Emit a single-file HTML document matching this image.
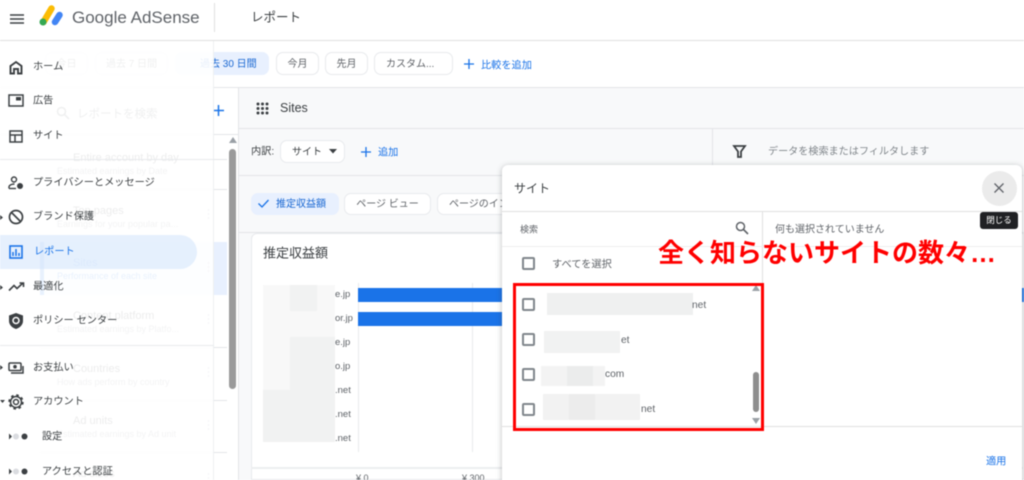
<!DOCTYPE html>
<html lang="ja"><head><meta charset="utf-8"><style>
html,body{margin:0;padding:0;background:#fff}
#p{position:relative;width:1024px;height:480px;overflow:hidden;background:#f8f9fa;font-family:"Liberation Sans","Noto Sans CJK JP",sans-serif;color:#3c4043;filter:blur(.45px)}
#p div{position:absolute;box-sizing:border-box}
.t{position:absolute;white-space:nowrap;line-height:14px;font-size:10.2px;transform:translateY(-5.5px)}
.l{transform:translateY(-6.2px)}
.chip{border:1px solid #e8eaed;border-radius:7px;background:#fff;text-align:center;font-size:10px;line-height:23px;color:#5f6368;white-space:nowrap;overflow:hidden}
.blue{color:#1a73e8}
svg{position:absolute;overflow:visible}
.cb{width:13px;height:13px;border:2px solid #80868b;border-radius:2px;background:#fff}
.pt{background:#f1f2f2}
</style></head><body><div id="p">

<!-- top -->
<div style="left:0;top:0;width:1024px;height:41px;background:#fff;border-bottom:1px solid #e0e0e0"></div>
<div style="left:0;top:41px;width:1024px;height:47px;background:#fff;border-bottom:1px solid #e3e5e8"></div>
<svg style="left:10px;top:14px" width="14" height="10"><path d="M0 1H14M0 5H14M0 9H14" stroke="#3c4043" stroke-width="1.5"/></svg>
<svg style="left:0;top:0" width="70" height="30"><path d="M43.500 22L51.500 8.500" stroke="#fbbc04" stroke-width="6.500" stroke-linecap="round"/><path d="M55 22L59.500 15" stroke="#4285f4" stroke-width="6.500" stroke-linecap="round"/><circle cx="43" cy="22" r="3.500" fill="#34a853"/></svg>
<span class="t l" style="left:72px;top:18px;font-size:17px;color:#5f6368;line-height:20px;transform:translateY(-10px)">Google AdSense</span>
<div style="left:214px;top:3px;width:1px;height:29px;background:#e0e0e0"></div>
<span class="t" style="left:251px;top:16px;font-size:12.500px;color:#3c4043">レポート</span>

<!-- date chips -->
<div class="chip" style="left:45px;top:52px;width:43px;height:23px">今日</div>
<div class="chip" style="left:95px;top:52px;width:73px;height:23px">過去 7 日間</div>
<div class="chip" style="left:175px;top:52px;width:94px;height:23px;background:#e8f0fe;border-color:#e8f0fe;color:#1967d2;text-align:left;padding-left:24px">過去 30 日間</div>
<div class="chip" style="left:276px;top:52px;width:43px;height:23px">今月</div>
<div class="chip" style="left:325px;top:52px;width:43px;height:23px">先月</div>
<div class="chip" style="left:374px;top:52px;width:79px;height:23px;text-align:left;padding-left:11px">カスタム...</div>
<svg style="left:464px;top:59px" width="10" height="10"><path d="M5 0V10M0 5H10" stroke="#1a73e8" stroke-width="1.300"/></svg>
<span class="t blue" style="left:481px;top:65px">比較を追加</span>

<!-- left panel -->
<div style="left:0;top:88px;width:239px;height:392px;background:#fff;border-right:1px solid #e3e5e8"></div>
<div style="left:0;top:134px;width:239px;height:1px;background:#e3e5e8"></div>
<svg style="left:56px;top:106px" width="14" height="14"><circle cx="5.500" cy="5.500" r="4" fill="none" stroke="#5f6368" stroke-width="1.500"/><path d="M8.500 8.500L13 13" stroke="#5f6368" stroke-width="1.500"/></svg>
<span class="t" style="left:77px;top:113px;font-size:11.500px;color:#5f6368">レポートを検索</span>
<svg style="left:213px;top:105px" width="11" height="11"><path d="M5.500 0V11M0 5.500H11" stroke="#1a73e8" stroke-width="1.500"/></svg>
<div style="left:40px;top:242px;width:187px;height:53px;background:#e8f0fe"></div>
<div style="left:40px;top:242px;width:4px;height:53px;background:#1a73e8"></div>
<div style="left:40px;top:159px;width:187px;height:1px;background:#e3e5e8"></div>
<div style="left:40px;top:189px;width:187px;height:1px;background:#e3e5e8"></div>
<div style="left:40px;top:347px;width:187px;height:1px;background:#e3e5e8"></div>
<div style="left:40px;top:400px;width:187px;height:1px;background:#e3e5e8"></div>
<div style="left:40px;top:452px;width:187px;height:1px;background:#e3e5e8"></div>
<span class="t l" style="left:73px;top:157px;font-size:11px">Entire account by day</span>
<span class="t l" style="left:57px;top:170px;font-size:9px;color:#80868b">Estimated earnings by Date</span>
<span class="t l" style="left:73px;top:210px;font-size:11px">Top pages</span>
<span class="t l" style="left:57px;top:223px;font-size:9px;color:#80868b">Earnings for your popular pa...</span>
<span class="t l blue" style="left:73px;top:262px;font-size:11px">Sites</span>
<span class="t l blue" style="left:57px;top:275px;font-size:9px">Performance of each site</span>
<span class="t l" style="left:73px;top:315px;font-size:11px">Content platform</span>
<span class="t l" style="left:57px;top:328px;font-size:9px;color:#80868b">Estimated earnings by Platfo...</span>
<span class="t l" style="left:73px;top:368px;font-size:11px">Countries</span>
<span class="t l" style="left:57px;top:381px;font-size:9px;color:#80868b">How ads perform by country</span>
<span class="t l" style="left:73px;top:420px;font-size:11px">Ad units</span>
<span class="t l" style="left:57px;top:433px;font-size:9px;color:#80868b">Estimated earnings by Ad unit</span>
<span class="t l" style="left:73px;top:473px;font-size:11px">Ad sizes</span>
<svg style="left:207px;top:209px" width="3" height="280" fill="#bdc1c6"><circle cx="1.500" cy="1" r="1.100"/><circle cx="1.500" cy="5" r="1.100"/><circle cx="1.500" cy="9" r="1.100"/><circle cx="1.500" cy="54" r="1.100"/><circle cx="1.500" cy="58" r="1.100"/><circle cx="1.500" cy="62" r="1.100"/><circle cx="1.500" cy="106" r="1.100"/><circle cx="1.500" cy="110" r="1.100"/><circle cx="1.500" cy="114" r="1.100"/><circle cx="1.500" cy="159" r="1.100"/><circle cx="1.500" cy="163" r="1.100"/><circle cx="1.500" cy="167" r="1.100"/><circle cx="1.500" cy="212" r="1.100"/><circle cx="1.500" cy="216" r="1.100"/><circle cx="1.500" cy="220" r="1.100"/><circle cx="1.500" cy="265" r="1.100"/><circle cx="1.500" cy="269" r="1.100"/></svg>
<!-- left scrollbar -->
<svg style="left:229px;top:137px" width="8" height="6"><path d="M0 6L4 0L8 6Z" fill="#9aa0a6"/></svg>
<div style="left:229px;top:149px;width:7px;height:240px;border-radius:4px;background:#9a9a9a"></div>

<!-- main -->
<div style="left:239px;top:128px;width:785px;height:1px;background:#e3e5e8"></div>
<svg style="left:256px;top:102px" width="13" height="13" fill="#3c4043"><circle cx="2" cy="2" r="1.500"/><circle cx="6.500" cy="2" r="1.500"/><circle cx="11" cy="2" r="1.500"/><circle cx="2" cy="6.500" r="1.500"/><circle cx="6.500" cy="6.500" r="1.500"/><circle cx="11" cy="6.500" r="1.500"/><circle cx="2" cy="11" r="1.500"/><circle cx="6.500" cy="11" r="1.500"/><circle cx="11" cy="11" r="1.500"/></svg>
<span class="t l" style="left:280px;top:107px;font-size:12.500px">Sites</span>
<span class="t" style="left:251px;top:151px">内訳:</span>
<div class="chip" style="left:280px;top:140px;width:65px;height:23px;text-align:left;padding-left:11px;color:#3c4043">サイト</div>
<svg style="left:329px;top:149px" width="8" height="5"><path d="M0 0H8L4 4.500Z" fill="#3c4043"/></svg>
<svg style="left:361px;top:147px" width="10" height="10"><path d="M5 0V10M0 5H10" stroke="#1a73e8" stroke-width="1.300"/></svg>
<span class="t blue" style="left:378px;top:152px">追加</span>
<div style="left:712px;top:128px;width:1px;height:47px;background:#e3e5e8"></div>
<svg style="left:733px;top:145px" width="13" height="13"><path d="M1 1H12L8 6.500V12H5V6.500Z" fill="none" stroke="#3c4043" stroke-width="1.800"/></svg>
<span class="t" style="left:768px;top:151px;color:#80868b;font-size:10.100px">データを検索またはフィルタします</span>
<div style="left:239px;top:175px;width:785px;height:1px;background:#e3e5e8"></div>

<div class="chip" style="left:251px;top:193px;width:88px;height:22px;background:#e8f0fe;border-color:#e8f0fe;color:#1967d2;text-align:left;padding-left:24px;line-height:22px">推定収益額</div>
<svg style="left:258px;top:199px" width="11" height="9"><path d="M.5 4.500L4 8L10.500 1" fill="none" stroke="#1a73e8" stroke-width="1.300"/></svg>
<div class="chip" style="left:344px;top:193px;width:87px;height:22px;line-height:22px">ページ ビュー</div>
<div class="chip" style="left:437px;top:193px;width:100px;height:22px;line-height:22px;text-align:left;padding-left:11px">ページのインプレッション</div>
<div style="left:239px;top:232px;width:785px;height:1px;background:#e3e5e8"></div>

<!-- card -->
<div style="left:251px;top:233px;width:773px;height:247px;background:#fff;border:1px solid #e8eaed;border-radius:6px 0 0 0"></div>
<span class="t" style="left:263px;top:252px;font-size:13px">推定収益額</span>
<div style="left:263px;top:285px;width:72px;height:157px;background:#f8f8f8"></div>
<div class="pt" style="left:290px;top:285px;width:27px;height:26px"></div>
<div class="pt" style="left:290px;top:337px;width:45px;height:105px"></div>
<div class="pt" style="left:263px;top:390px;width:27px;height:52px"></div>
<div style="left:358px;top:283px;width:1px;height:169px;background:#e8eaed"></div>
<div style="left:472px;top:283px;width:1px;height:169px;background:#e8eaed"></div>
<div style="left:358px;top:288px;width:145px;height:14px;background:#1a73e8"></div>
<div style="left:358px;top:312px;width:145px;height:14px;background:#1a73e8"></div>
<span class="t l" style="left:335px;top:294px;color:#5f6368;font-size:9.500px">e.jp</span>
<span class="t l" style="left:335px;top:318px;color:#5f6368;font-size:9.500px">or.jp</span>
<span class="t l" style="left:335px;top:342px;color:#5f6368;font-size:9.500px">e.jp</span>
<span class="t l" style="left:335px;top:366px;color:#5f6368;font-size:9.500px">o.jp</span>
<span class="t l" style="left:335px;top:390px;color:#5f6368;font-size:9.500px">.net</span>
<span class="t l" style="left:335px;top:414px;color:#5f6368;font-size:9.500px">.net</span>
<span class="t l" style="left:335px;top:438px;color:#5f6368;font-size:9.500px">.net</span>
<div style="left:251px;top:467px;width:773px;height:2px;background:#eceef0"></div>
<span class="t l" style="left:356px;top:477px;color:#5f6368;font-size:9px">¥ 0</span>
<span class="t l" style="left:462px;top:477px;color:#5f6368;font-size:9px">¥ 300</span>
<div style="left:1021px;top:288px;width:3px;height:14px;background:#1a73e8"></div>

<!-- sidebar overlay -->
<div style="left:0;top:41px;width:214px;height:439px;background:rgba(255,255,255,.9);border-right:1px solid #eef0f1"></div>
<div style="left:0;top:159px;width:214px;height:1px;background:#e8eaed"></div>
<div style="left:0;top:345px;width:214px;height:1px;background:#e8eaed"></div>
<div style="left:0;top:235px;width:197px;height:34px;background:rgba(210,227,252,.55);border-radius:0 17px 17px 0"></div>

<svg style="left:9px;top:61px" width="14" height="13"><path d="M1.500 12.500V5L7 1L12.500 5V12.500H9V8H5V12.500Z" fill="none" stroke="#3c4043" stroke-width="1.900"/></svg>
<span class="t" style="left:33px;top:66px">ホーム</span>
<svg style="left:8px;top:94px" width="16" height="13"><rect x="1" y="1" width="14" height="11" fill="none" stroke="#3c4043" stroke-width="1.500"/><rect x="8" y="3" width="5" height="3.500" fill="#3c4043"/></svg>
<span class="t" style="left:33px;top:100px">広告</span>
<svg style="left:9px;top:130px" width="14" height="13"><rect x="1" y="1" width="12" height="11" fill="none" stroke="#3c4043" stroke-width="1.500"/><path d="M1 5H13M6 5V12" stroke="#3c4043" stroke-width="1.500"/></svg>
<span class="t" style="left:33px;top:135px">サイト</span>
<svg style="left:8px;top:176px" width="16" height="14"><circle cx="6" cy="3.500" r="2.500" fill="none" stroke="#3c4043" stroke-width="1.400"/><path d="M1 12.500V11C1 9 4 8 6.500 8" fill="none" stroke="#3c4043" stroke-width="1.400"/><path d="M1 12.500H8" stroke="#3c4043" stroke-width="1.400"/><circle cx="12" cy="10" r="3" fill="#3c4043"/></svg>
<span class="t" style="left:33px;top:182px">プライバシーとメッセージ</span>
<svg style="left:8px;top:209px" width="16" height="16"><circle cx="8" cy="8" r="6.500" fill="none" stroke="#3c4043" stroke-width="1.700"/><path d="M3.500 3.500L12.500 12.500" stroke="#3c4043" stroke-width="1.700"/></svg>
<span class="t" style="left:33px;top:216px">ブランド保護</span>
<svg style="left:9px;top:245px" width="14" height="14"><rect x="1" y="1" width="12" height="12" fill="none" stroke="#1a73e8" stroke-width="1.600"/><path d="M4 11V7M7 11V4M10 11V8" stroke="#1a73e8" stroke-width="1.500"/></svg>
<span class="t blue" style="left:34px;top:251px">レポート</span>
<svg style="left:9px;top:282px" width="15" height="10"><path d="M0 8.500L5 3.500L8 6.500L14 1M10.500 1H14.500V5" fill="none" stroke="#3c4043" stroke-width="1.600"/></svg>
<span class="t" style="left:33px;top:286px">最適化</span>
<svg style="left:9px;top:313px" width="14" height="16"><path d="M7 0L14 2.500V8C14 12 10.500 15 7 16C3.500 15 0 12 0 8V2.500Z" fill="#3c4043"/><circle cx="7" cy="7.500" r="3" fill="none" stroke="#fff" stroke-width="1.500"/></svg>
<span class="t" style="left:33px;top:320px">ポリシー センター</span>
<svg style="left:8px;top:362px" width="16" height="12"><rect x="1" y="1" width="12" height="7.500" rx="1" fill="none" stroke="#3c4043" stroke-width="1.500"/><circle cx="7" cy="4.700" r="1.800" fill="#3c4043"/><path d="M15 4V11H3" fill="none" stroke="#3c4043" stroke-width="1.500"/></svg>
<span class="t" style="left:33px;top:367px">お支払い</span>
<svg style="left:8px;top:394px" width="16" height="16"><circle cx="8" cy="8" r="2.500" fill="none" stroke="#3c4043" stroke-width="1.500"/><circle cx="8" cy="8" r="5.500" fill="none" stroke="#3c4043" stroke-width="1.500"/><circle cx="8" cy="8" r="6.800" fill="none" stroke="#3c4043" stroke-width="1.800" stroke-dasharray="2.600 2.740"/></svg>
<span class="t" style="left:33px;top:401px">アカウント</span>
<svg style="left:0;top:365px" width="4" height="5"><path d="M0 0L3 2.500L0 5Z" fill="#3c4043"/></svg>
<svg style="left:0;top:285px" width="4" height="5"><path d="M0 0L3 2.500L0 5Z" fill="#3c4043"/></svg>
<svg style="left:0;top:215px" width="4" height="5"><path d="M0 0L3 2.500L0 5Z" fill="#3c4043"/></svg>
<svg style="left:0;top:400px" width="5" height="4"><path d="M0 0H5L2.500 3Z" fill="#3c4043"/></svg>
<svg style="left:9px;top:433px" width="20" height="7"><path d="M0 .5L3 3.500L0 6.500Z" fill="#3c4043"/><circle cx="7" cy="3.500" r="3" fill="#dadce0"/><circle cx="15.500" cy="3.500" r="3" fill="#3c4043"/></svg>
<span class="t" style="left:42px;top:436px">設定</span>
<svg style="left:9px;top:468px" width="20" height="7"><path d="M0 .5L3 3.500L0 6.500Z" fill="#3c4043"/><circle cx="7" cy="3.500" r="3" fill="#dadce0"/><circle cx="15.500" cy="3.500" r="3" fill="#3c4043"/></svg>
<span class="t" style="left:42px;top:471px">アクセスと認証</span>

<!-- dialog -->
<div style="left:502px;top:165px;width:520px;height:330px;background:#fff;border-radius:6px;box-shadow:0 1px 6px rgba(60,64,67,.35)"></div>
<span class="t" style="left:514px;top:187px;font-size:12px">サイト</span>
<div style="left:502px;top:211px;width:520px;height:1px;background:#e0e0e0"></div>
<div style="left:982px;top:171px;width:35px;height:35px;border-radius:50%;background:#ebebeb"></div>
<svg style="left:994px;top:183px" width="10" height="10"><path d="M.5 .5L9.500 9.500M9.500 .5L.5 9.500" stroke="#5f6368" stroke-width="1.300"/></svg>
<div style="left:980px;top:212px;width:38px;height:17px;border-radius:3px;background:#202124;color:#fff;font-size:8.500px;line-height:17px;text-align:center">閉じる</div>
<span class="t" style="left:520px;top:228px;font-size:9px;color:#5f6368">検索</span>
<svg style="left:735px;top:221px" width="14" height="14"><circle cx="5.500" cy="5.500" r="4" fill="none" stroke="#5f6368" stroke-width="1.500"/><path d="M8.500 8.500L13 13" stroke="#5f6368" stroke-width="1.600"/></svg>
<div style="left:762px;top:211px;width:1px;height:215px;background:#e0e0e0"></div>
<span class="t" style="left:775px;top:229px;color:#5f6368;font-size:10px">何も選択されていません</span>
<div style="left:502px;top:246px;width:520px;height:1px;background:#eeeeee"></div>
<div class="cb" style="left:522px;top:257px"></div>
<span class="t" style="left:552px;top:264px;color:#5f6368">すべてを選択</span>
<div style="left:502px;top:426px;width:520px;height:1px;background:#e0e0e0"></div>

<div class="cb" style="left:522px;top:298px"></div>
<div class="pt" style="left:547px;top:293px;width:146px;height:22px;background:#eff0f0"></div>
<span class="t l" style="left:692px;top:305px;color:#5f6368">net</span>
<div class="cb" style="left:522px;top:333px"></div>
<div class="pt" style="left:544px;top:331px;width:76px;height:22px"></div>
<span class="t l" style="left:621px;top:340px;color:#5f6368">et</span>
<div class="cb" style="left:522px;top:368px"></div>
<div class="pt" style="left:541px;top:366px;width:64px;height:20px;background:#f3f3f3"></div>
<div class="pt" style="left:567px;top:366px;width:26px;height:20px;background:#ebecec"></div>
<span class="t l" style="left:605px;top:374px;color:#5f6368">com</span>
<div class="cb" style="left:522px;top:403px"></div>
<div class="pt" style="left:543px;top:394px;width:97px;height:26px;background:#f2f2f2"></div>
<div class="pt" style="left:569px;top:394px;width:26px;height:26px;background:#ececec"></div>
<span class="t l" style="left:641px;top:409px;color:#5f6368">net</span>

<svg style="left:752px;top:285px" width="8" height="6"><path d="M0 6L4 0L8 6Z" fill="#9aa0a6"/></svg>
<div style="left:753px;top:372px;width:6px;height:40px;border-radius:3px;background:#8e8e8e"></div>
<svg style="left:752px;top:418px" width="8" height="6"><path d="M0 0L4 6L8 0Z" fill="#9aa0a6"/></svg>
<span class="t blue" style="left:986px;top:461px">適用</span>

<!-- annotation -->
<div style="left:513px;top:283px;width:251px;height:148px;border:3px solid #f00"></div>
<span class="t" style="left:658px;top:253px;font-size:26px;font-weight:700;color:#f00;line-height:30px;transform:translateY(-15px)">全く知らないサイトの数々…</span>

</div></body></html>
